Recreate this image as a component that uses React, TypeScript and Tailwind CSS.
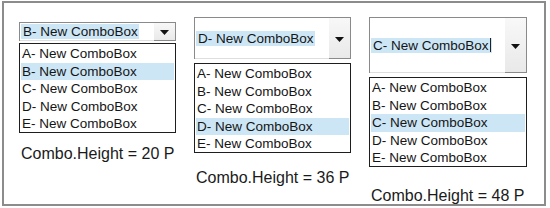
import React from "react";

const items = ["A- New ComboBox", "B- New ComboBox", "C- New ComboBox", "D- New ComboBox", "E- New ComboBox"];

function Arrow() {
  return (
    <svg width="9" height="5" viewBox="0 0 9 5" className="block">
      <polygon points="0,0 9,0 4.5,5" fill="#111" />
    </svg>
  );
}

function Combo({ hClass, value, cursor }: { hClass: string; value: string; cursor?: boolean }) {
  return (
    <div className={`flex items-stretch border-t border-l border-r border-[#8a8a8a] bg-white ${hClass}`}>
      <div className="flex-1 flex items-center pl-[1px] border-b border-[#dedede]">
        <span className="flex items-center h-[15px] leading-[15px] bg-[#cde6f6] pl-[2px] pr-[1px] text-[13.5px] text-[#151515]">
          {value}
          {cursor && <span className="inline-block w-[1px] h-[14px] bg-[#222] ml-[1px]" />}
        </span>
      </div>
      <div className="w-[21px] flex items-center justify-center bg-gradient-to-b from-[#f8f8f8] to-[#e9e9e9] border-b border-[#8a8a8a] pt-[2px]">
        <Arrow />
      </div>
    </div>
  );
}

function List({ sel, mtClass }: { sel: number; mtClass: string }) {
  return (
    <div className={`h-[90px] border border-[#1e1e1e] bg-white p-[1px] ${mtClass}`}>
      {items.map((t, i) => (
        <div
          key={t}
          className={`h-[17.5px] leading-[17.5px] pl-[1px] text-[13.5px] text-[#151515] whitespace-nowrap ${i === sel ? "bg-[#cde6f6]" : ""}`}
        >
          {t}
        </div>
      ))}
    </div>
  );
}

export default function App() {
  return (
    <div className="w-[550px] h-[208px] bg-white pt-[1px] pl-[2px]" style={{ fontFamily: '"Liberation Sans", Arial, sans-serif' }}>
      <div className="w-[544px] h-[205px] border-2 border-[#8c8c8c] flex items-start pl-[15px] gap-[18px]">
        <div className="w-[157px] mt-[19px]">
          <Combo hClass="h-[19px]" value="B- New ComboBox" />
          <List sel={1} mtClass="mt-[2px]" />
          <div className="mt-[12px] pl-[2px] text-[16px] leading-[18px] text-[#1a1a1a] whitespace-nowrap">Combo.Height = 20 P</div>
        </div>
        <div className="w-[157px] mt-[14px]">
          <Combo hClass="h-[42px]" value="D- New ComboBox" />
          <List sel={3} mtClass="mt-[4px]" />
          <div className="mt-[16px] pl-[2px] text-[16px] leading-[18px] text-[#1a1a1a] whitespace-nowrap">Combo.Height = 36 P</div>
        </div>
        <div className="w-[158px] mt-[14px]">
          <Combo hClass="h-[56px]" value="C- New ComboBox" cursor />
          <List sel={2} mtClass="mt-[4px]" />
          <div className="mt-[20px] pl-[2px] text-[16px] leading-[17px] text-[#1a1a1a] whitespace-nowrap">Combo.Height = 48 P</div>
        </div>
      </div>
    </div>
  );
}
